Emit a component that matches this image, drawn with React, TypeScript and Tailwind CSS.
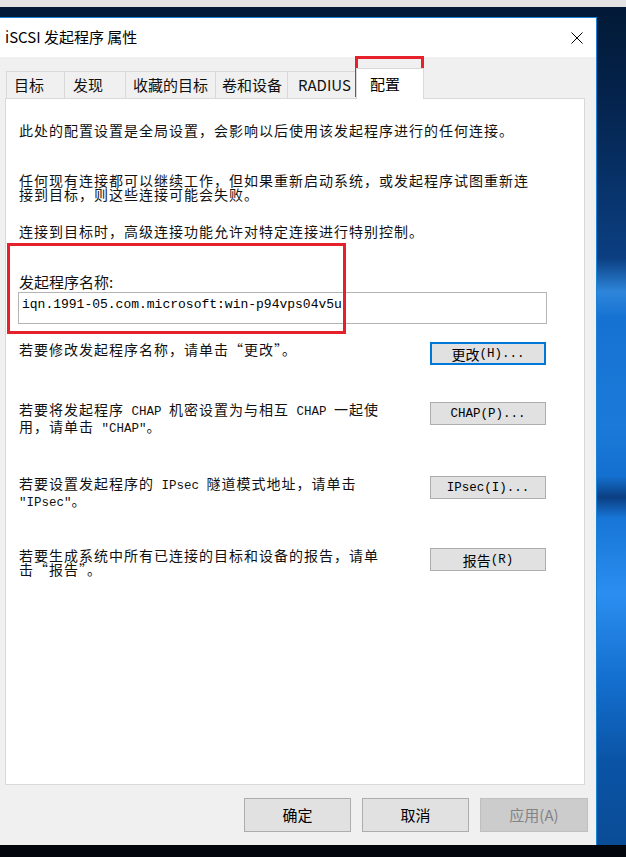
import React from "react";

const Latin = ({ children }: { children: React.ReactNode }) => (
  <span className="font-['Liberation_Mono',monospace] text-[12.5px] tracking-normal">{children}</span>
);

function Tab({ label, w, pl, selected }: { label: string; w: string; pl: string; selected?: boolean }) {
  if (selected) {
    return (
      <div className={`relative z-10 -ml-[2px] h-[31px] ${w} bg-white border border-b-0 border-[#d9d9d9] ${pl} pt-[4px] text-[15px] leading-[22px] text-black`}>
        {label}
      </div>
    );
  }
  return (
    <div className={`h-[28px] ${w} bg-[#f0f0f0] border border-b-0 border-l-0 first:border-l border-[#d9d9d9] ${pl} pt-[2px] text-[15px] leading-[22px] text-[#111] whitespace-nowrap overflow-hidden`}>
      {label}
    </div>
  );
}

function SmallButton({ children, focused }: { children: React.ReactNode; focused?: boolean }) {
  return (
    <div
      className={`w-[116px] h-[23px] flex items-center justify-center bg-[#e1e1e1] text-[14px] leading-[14px] text-black ${
        focused ? "border-2 border-[#0078d7]" : "border border-[#adadad]"
      }`}
    >
      {children}
    </div>
  );
}

function Row({ lines, button, mt, focused }: { lines: React.ReactNode[]; button: React.ReactNode; mt: string; focused?: boolean }) {
  return (
    <div className={`flex items-start ${mt}`}>
      <div className="w-[411px] pt-0 tracking-[1px] text-[14px] leading-[14px] text-[#111]">
        {lines.map((l, i) => (
          <div key={i} className="whitespace-nowrap">
            {l}
          </div>
        ))}
      </div>
      <SmallButton focused={focused}>{button}</SmallButton>
    </div>
  );
}

export default function App() {
  return (
    <div className="w-[626px] h-[857px] overflow-hidden flex flex-col font-['Noto_Sans_CJK_SC',sans-serif] bg-[#03070d]">
      <div className="h-[7px] w-full bg-[#e3e3e3]" />
      <div className="relative flex-1 flex bg-[linear-gradient(180deg,#021a36_0%,#04224a_10%,#0b3f82_30%,#2e86db_34%,#1672d2_37%,#1b7ad9_50%,#1470d0_56%,#0b3f82_58.5%,#1776d8_61%,#2b8ef0_70%,#1470d0_80%,#0a54a6_90%,#0a4c96_100%)]">
        {/* Dialog */}
        <div className="mt-[10px] w-[597px] h-[828px] flex flex-col border-t border-r border-[#1883d7] bg-[#f0f0f0]">
          {/* Title bar */}
          <div className="h-[39px] bg-white flex items-center justify-between pl-[5px] pr-[13px]">
            <span className="text-[15px] text-black leading-[20px] pb-[1px]">iSCSI 发起程序 属性</span>
            <svg width="12" height="12" viewBox="0 0 12 12">
              <path d="M0.5 0.5L11.5 11.5M11.5 0.5L0.5 11.5" stroke="#000" strokeWidth="1" />
            </svg>
          </div>

          {/* Tabs */}
          <div className="mt-[11px] pl-[6px] flex items-end h-[31px]">
            <Tab label="目标" w="w-[59px]" pl="pl-[7px]" />
            <Tab label="发现" w="w-[61px]" pl="pl-[8px]" />
            <Tab label="收藏的目标" w="w-[90px]" pl="pl-[7px]" />
            <Tab label="卷和设备" w="w-[72px]" pl="pl-[6px]" />
            <Tab label="RADIUS" w="w-[70px]" pl="pl-[10px]" />
            <Tab label="配置" w="w-[68px]" pl="pl-[13px]" selected />
          </div>

          {/* Panel */}
          <div className="-mt-[1px] ml-[5px] w-[580px] h-[687px] bg-white border border-[#d9d9d9] pl-[13px]">
            <div className="mt-[24px] tracking-[1px] text-[14px] leading-[14px] text-[#111] whitespace-nowrap">
              此处的配置设置是全局设置，会影响以后使用该发起程序进行的任何连接。
            </div>
            <div className="mt-[36px] tracking-[1px] text-[14px] leading-[14px] text-[#111] whitespace-nowrap">
              <div>任何现有连接都可以继续工作，但如果重新启动系统，或发起程序试图重新连</div>
              <div>接到目标，则这些连接可能会失败。</div>
            </div>
            <div className="mt-[23px] tracking-[1px] text-[14px] leading-[14px] text-[#111] whitespace-nowrap">
              连接到目标时，高级连接功能允许对特定连接进行特别控制。
            </div>
            <div className="mt-[35px] text-[15px] leading-[18px] text-[#111]">发起程序名称:</div>
            <div className="mt-[1px] -ml-[1px] w-[529px] h-[32px] border border-[#b4b4b4] bg-white pl-[3px] pt-[4px] font-['Liberation_Mono',monospace] text-[13px] leading-[16px] text-black">
              iqn.1991-05.com.microsoft:win-p94vps04v5u
            </div>

            <Row
              mt="mt-[18px]"
              focused
              lines={["若要修改发起程序名称，请单击“更改”。"]}
              button={
                <>
                  更改<Latin>(H)...</Latin>
                </>
              }
            />
            <Row
              mt="mt-[37px]"
              lines={[
                <>
                  若要将发起程序<Latin> CHAP </Latin>机密设置为与相互<Latin> CHAP </Latin>一起使
                </>,
                <>
                  用，请单击<Latin> "CHAP"</Latin>。
                </>,
              ]}
              button={<Latin>CHAP(P)...</Latin>}
            />
            <Row
              mt="mt-[40px]"
              lines={[
                <>
                  若要设置发起程序的<Latin> IPsec </Latin>隧道模式地址，请单击
                </>,
                <>
                  <Latin>"IPsec"</Latin>。
                </>,
              ]}
              button={<Latin>IPsec(I)...</Latin>}
            />
            <Row
              mt="mt-[38px]"
              lines={["若要生成系统中所有已连接的目标和设备的报告，请单", "击“报告”。"]}
              button={
                <>
                  报告<Latin>(R)</Latin>
                </>
              }
            />
          </div>

          {/* Bottom buttons */}
          <div className="mt-[13px] flex justify-end gap-[11px] pr-[8px]">
            <div className="w-[107px] h-[34px] flex items-center justify-center bg-[#e1e1e1] border border-[#adadad] text-[15px] text-black">确定</div>
            <div className="w-[107px] h-[34px] flex items-center justify-center bg-[#e1e1e1] border border-[#adadad] text-[15px] text-black">取消</div>
            <div className="w-[108px] h-[34px] flex items-center justify-center bg-[#cccccc] border border-[#bfbfbf] text-[15px] text-[#838383]">应用(A)</div>
          </div>
        </div>

        {/* Red annotation boxes */}
        <div className="absolute left-[355px] top-[49px] w-[69px] h-[41px] border-[3px] border-[#e6212b]" />
        <div className="absolute left-[7px] top-[236px] w-[339px] h-[91px] border-[3px] border-[#e6212b]" />
      </div>
      <div className="h-[12px] w-full bg-[#03070d]" />
    </div>
  );
}
